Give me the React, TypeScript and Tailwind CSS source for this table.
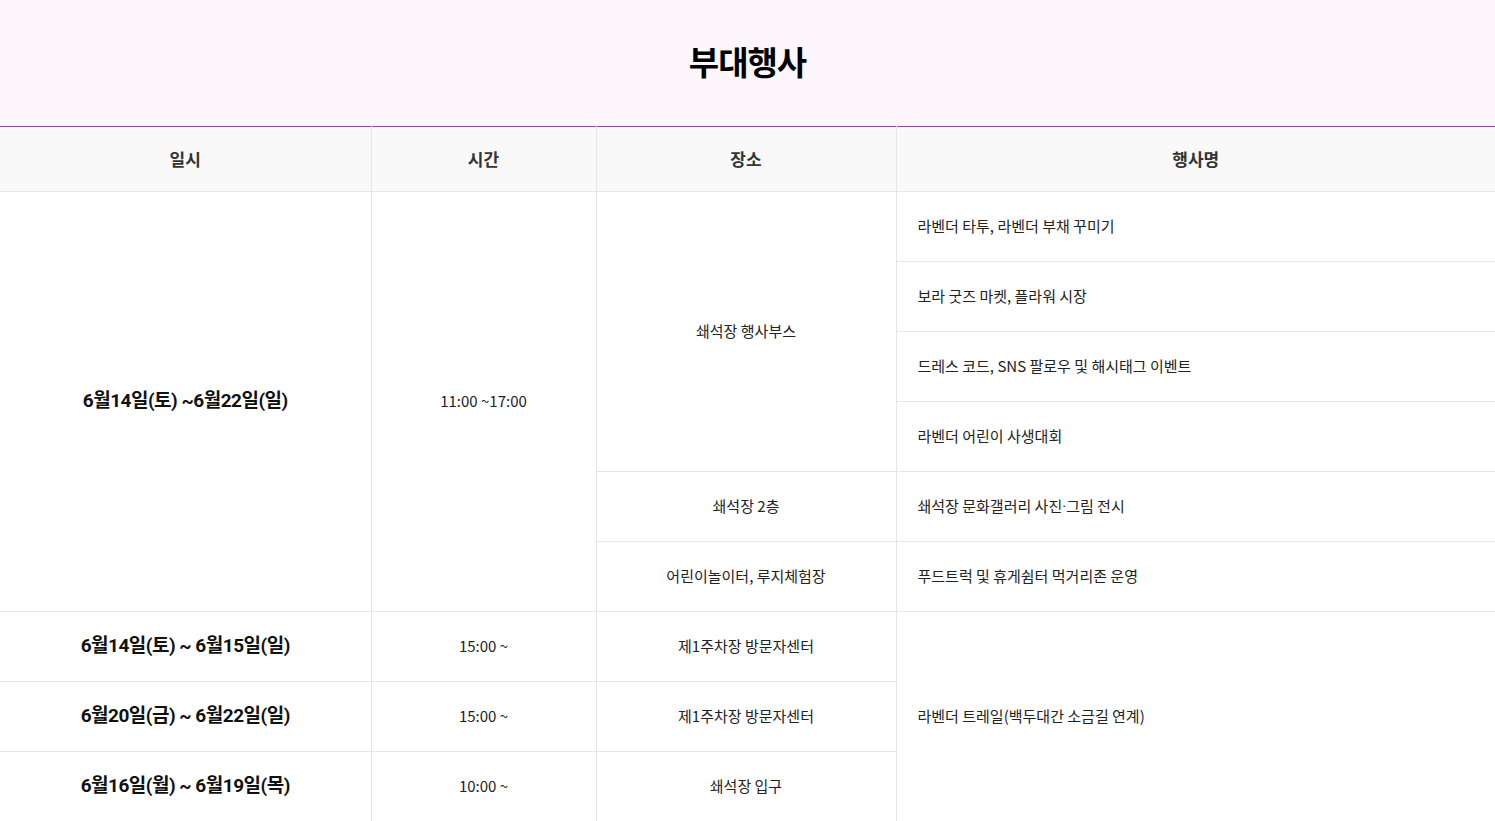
const kr = "font-['Noto_Sans_CJK_KR',sans-serif]";

type Row = { date?: string; time?: string; place?: string; event?: string };

export default function App() {
  const cell = "border-b border-[#e6e6e6] h-[70px] text-[15px] text-[#222]";
  const dateCls =
    "border-b border-r border-[#e6e6e6] h-[70px] text-center text-[19px] font-bold text-[#111] tracking-[-0.5px] font-['Roboto','Noto_Sans_CJK_KR',sans-serif]";

  const lower: Row[] = [
    { date: "6월14일(토) ~ 6월15일(일)", time: "15:00 ~", place: "제1주차장 방문자센터" },
    { date: "6월20일(금) ~ 6월22일(일)", time: "15:00 ~", place: "제1주차장 방문자센터" },
    { date: "6월16일(월) ~ 6월19일(목)", time: "10:00 ~", place: "쇄석장 입구" },
  ];

  return (
    <div className={`w-full bg-white ${kr}`}>
      <div className="bg-[#fdf7fd] h-[126px] flex items-center justify-center pb-[3px]">
        <h2 className="text-[33px] font-bold text-black tracking-[-1px] leading-none">부대행사</h2>
      </div>

      <table className="w-full border-collapse table-fixed">
        <colgroup>
          <col className="w-[371px]" />
          <col className="w-[225px]" />
          <col className="w-[300px]" />
          <col />
        </colgroup>
        <thead>
          <tr className="bg-[#f9f9f9] border-t border-[#8a4c9e]">
            {["일시", "시간", "장소", "행사명"].map((h, i) => (
              <th
                key={h}
                className={`h-[65px] border-b border-[#e6e6e6] text-[17px] font-semibold text-[#333] ${i < 3 ? "border-r" : ""}`}
              >
                {h}
              </th>
            ))}
          </tr>
        </thead>
        <tbody>
          <tr>
            <td rowSpan={6} className={dateCls}>6월14일(토) ~6월22일(일)</td>
            <td rowSpan={6} className={`${cell} border-r text-center`}>11:00 ~17:00</td>
            <td rowSpan={4} className={`${cell} border-r text-center`}>쇄석장 행사부스</td>
            <td className={`${cell} pl-[21px]`}>라벤더 타투, 라벤더 부채 꾸미기</td>
          </tr>
          <tr>
            <td className={`${cell} pl-[21px]`}>보라 굿즈 마켓, 플라워 시장</td>
          </tr>
          <tr>
            <td className={`${cell} pl-[21px]`}>드레스 코드, SNS 팔로우 및 해시태그 이벤트</td>
          </tr>
          <tr>
            <td className={`${cell} pl-[21px]`}>라벤더 어린이 사생대회</td>
          </tr>
          <tr>
            <td className={`${cell} border-r text-center`}>쇄석장 2층</td>
            <td className={`${cell} pl-[21px]`}>
              쇄석장 문화갤러리 사진<span className="font-['Roboto',sans-serif]">·</span>그림 전시
            </td>
          </tr>
          <tr>
            <td className={`${cell} border-r text-center`}>어린이놀이터, 루지체험장</td>
            <td className={`${cell} pl-[21px]`}>푸드트럭 및 휴게쉼터 먹거리존 운영</td>
          </tr>
          {lower.map((r, i) => (
            <tr key={i}>
              <td className={dateCls}>{r.date}</td>
              <td className={`${cell} border-r text-center`}>{r.time}</td>
              <td className={`${cell} border-r text-center`}>{r.place}</td>
              {i === 0 && (
                <td rowSpan={3} className={`${cell} pl-[21px]`}>
                  라벤더 트레일(백두대간 소금길 연계)
                </td>
              )}
            </tr>
          ))}
        </tbody>
      </table>
    </div>
  );
}
